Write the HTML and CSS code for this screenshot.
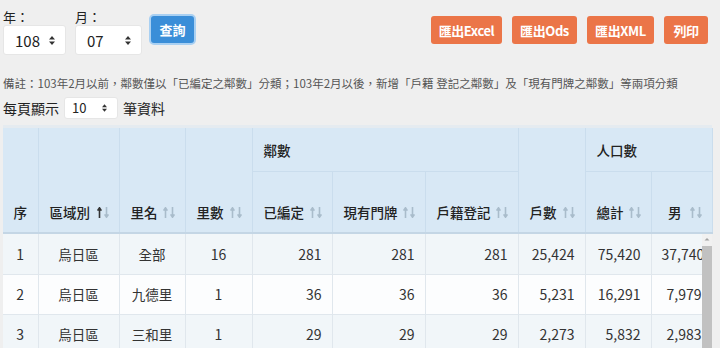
FILE: index.html
```html
<!DOCTYPE html>
<html lang="zh-Hant">
<head>
<meta charset="utf-8">
<title>鄰數統計</title>
<link rel="stylesheet" href="styles.css">
</head>
<body>
<div class="topbar">
  <div class="filters">
    <div class="field">
      <span class="label">年：</span>
      <div class="select select-lg"><span>108</span><svg class="caret" width="6" height="9" viewBox="0 0 6 9"><path d="M3 0 L6 3.5 H0 Z M3 9 L6 5.5 H0 Z" fill="#333"/></svg></div>
    </div>
    <div class="field">
      <span class="label">月：</span>
      <div class="select select-lg select-month"><span>07</span><svg class="caret" width="6" height="9" viewBox="0 0 6 9"><path d="M3 0 L6 3.5 H0 Z M3 9 L6 5.5 H0 Z" fill="#333"/></svg></div>
    </div>
    <button class="btn btn-query">查詢</button>
  </div>
  <div class="exports">
    <button class="btn btn-orange btn-excel">匯出Excel</button>
    <button class="btn btn-orange btn-ods">匯出Ods</button>
    <button class="btn btn-orange btn-xml">匯出XML</button>
    <button class="btn btn-orange btn-print">列印</button>
  </div>
</div>

<p class="note">備註：103年2月以前，鄰數僅以「已編定之鄰數」分類；103年2月以後，新增「戶籍 登記之鄰數」及「現有門牌之鄰數」等兩項分類</p>

<div class="length">
  <span>每頁顯示</span>
  <div class="select select-sm"><span>10</span><svg class="caret" width="5" height="8" viewBox="0 0 6 9"><path d="M3 0 L6 3.5 H0 Z M3 9 L6 5.5 H0 Z" fill="#333"/></svg></div>
  <span>筆資料</span>
</div>

<div class="dt">
  <table class="dt-head">
    <colgroup>
      <col class="c1"><col class="c2"><col class="c3"><col class="c4"><col class="c5"><col class="c6"><col class="c7"><col class="c8"><col class="c9"><col class="c10">
    </colgroup>
    <thead>
      <tr class="hr1">
        <th rowspan="2" class="nosort">序</th>
        <th rowspan="2">區域別<svg class="sort" width="12" height="11" viewBox="0 0 12 11"><path d="M2.5 11 V1.5 M0.6 3.6 L2.5 0.8 L4.4 3.6" stroke="#333" stroke-width="1.6" fill="none"/><path d="M9.5 0 V9.5 M7.6 7.4 L9.5 10.2 L11.4 7.4" stroke="#a9bccb" stroke-width="1.6" fill="none"/></svg></th>
        <th rowspan="2">里名<svg class="sort" width="12" height="11" viewBox="0 0 12 11"><path d="M2.5 11 V1.5 M0.6 3.6 L2.5 0.8 L4.4 3.6" stroke="#a9bccb" stroke-width="1.6" fill="none"/><path d="M9.5 0 V9.5 M7.6 7.4 L9.5 10.2 L11.4 7.4" stroke="#a9bccb" stroke-width="1.6" fill="none"/></svg></th>
        <th rowspan="2">里數<svg class="sort" width="12" height="11" viewBox="0 0 12 11"><path d="M2.5 11 V1.5 M0.6 3.6 L2.5 0.8 L4.4 3.6" stroke="#a9bccb" stroke-width="1.6" fill="none"/><path d="M9.5 0 V9.5 M7.6 7.4 L9.5 10.2 L11.4 7.4" stroke="#a9bccb" stroke-width="1.6" fill="none"/></svg></th>
        <th colspan="3" class="group">鄰數</th>
        <th rowspan="2">戶數<svg class="sort" width="12" height="11" viewBox="0 0 12 11"><path d="M2.5 11 V1.5 M0.6 3.6 L2.5 0.8 L4.4 3.6" stroke="#a9bccb" stroke-width="1.6" fill="none"/><path d="M9.5 0 V9.5 M7.6 7.4 L9.5 10.2 L11.4 7.4" stroke="#a9bccb" stroke-width="1.6" fill="none"/></svg></th>
        <th colspan="2" class="group">人口數</th>
      </tr>
      <tr class="hr2">
        <th>已編定<svg class="sort" width="12" height="11" viewBox="0 0 12 11"><path d="M2.5 11 V1.5 M0.6 3.6 L2.5 0.8 L4.4 3.6" stroke="#a9bccb" stroke-width="1.6" fill="none"/><path d="M9.5 0 V9.5 M7.6 7.4 L9.5 10.2 L11.4 7.4" stroke="#a9bccb" stroke-width="1.6" fill="none"/></svg></th>
        <th>現有門牌<svg class="sort" width="12" height="11" viewBox="0 0 12 11"><path d="M2.5 11 V1.5 M0.6 3.6 L2.5 0.8 L4.4 3.6" stroke="#a9bccb" stroke-width="1.6" fill="none"/><path d="M9.5 0 V9.5 M7.6 7.4 L9.5 10.2 L11.4 7.4" stroke="#a9bccb" stroke-width="1.6" fill="none"/></svg></th>
        <th>戶籍登記<svg class="sort" width="12" height="11" viewBox="0 0 12 11"><path d="M2.5 11 V1.5 M0.6 3.6 L2.5 0.8 L4.4 3.6" stroke="#a9bccb" stroke-width="1.6" fill="none"/><path d="M9.5 0 V9.5 M7.6 7.4 L9.5 10.2 L11.4 7.4" stroke="#a9bccb" stroke-width="1.6" fill="none"/></svg></th>
        <th>總計<svg class="sort" width="12" height="11" viewBox="0 0 12 11"><path d="M2.5 11 V1.5 M0.6 3.6 L2.5 0.8 L4.4 3.6" stroke="#a9bccb" stroke-width="1.6" fill="none"/><path d="M9.5 0 V9.5 M7.6 7.4 L9.5 10.2 L11.4 7.4" stroke="#a9bccb" stroke-width="1.6" fill="none"/></svg></th>
        <th class="right">男<svg class="sort" width="12" height="11" viewBox="0 0 12 11"><path d="M2.5 11 V1.5 M0.6 3.6 L2.5 0.8 L4.4 3.6" stroke="#a9bccb" stroke-width="1.6" fill="none"/><path d="M9.5 0 V9.5 M7.6 7.4 L9.5 10.2 L11.4 7.4" stroke="#a9bccb" stroke-width="1.6" fill="none"/></svg></th>
      </tr>
    </thead>
  </table>
  <div class="dt-scroll">
    <table class="dt-body">
      <colgroup>
        <col class="c1"><col class="c2"><col class="c3"><col class="c4"><col class="c5"><col class="c6"><col class="c7"><col class="c8"><col class="c9"><col class="c10">
      </colgroup>
      <tbody>
        <tr><td class="ctr">1</td><td class="ctr cjk">烏日區</td><td class="ctr cjk">全部</td><td class="ctr">16</td><td>281</td><td>281</td><td>281</td><td>25,424</td><td>75,420</td><td>37,740</td></tr>
        <tr><td class="ctr">2</td><td class="ctr cjk">烏日區</td><td class="ctr cjk">九德里</td><td class="ctr">1</td><td>36</td><td>36</td><td>36</td><td>5,231</td><td>16,291</td><td>7,979</td></tr>
        <tr><td class="ctr">3</td><td class="ctr cjk">烏日區</td><td class="ctr cjk">三和里</td><td class="ctr">1</td><td>29</td><td>29</td><td>29</td><td>2,273</td><td>5,832</td><td>2,983</td></tr>
      </tbody>
    </table>
    <div class="vscroll">
      <svg class="vscroll-up" width="10" height="12" viewBox="0 0 10 12"><path d="M2.5 6.5 L5 4 L7.5 6.5 Z" fill="#a3a3a3"/></svg>
      <div class="vscroll-thumb"></div>
    </div>
  </div>
</div>
</body>
</html>
```

FILE: styles.css
```css
html, body {
  overflow: hidden;
}
body {
  margin: 0;
  padding: 0 8px 0 3px;
  background: #efefef;
  font-family: "Noto Sans CJK TC", "Noto Sans", sans-serif;
  color: #222;
}
.topbar {
  display: flex;
  justify-content: space-between;
  align-items: flex-start;
}
.filters {
  display: flex;
  align-items: flex-start;
  padding-top: 8px;
}
.field {
  display: flex;
  flex-direction: column;
}
.field + .field {
  margin-left: 9px;
}
.label {
  font-size: 13px;
  line-height: 17px;
  color: #222;
}
.select {
  display: flex;
  align-items: center;
  justify-content: space-between;
  background: #fff;
  border: 1px solid #e6e6e6;
  border-radius: 3px;
  box-sizing: border-box;
  color: #222;
}
.select-lg {
  width: 63px;
  height: 30px;
  padding: 0 10px 0 11px;
  font-size: 15px;
}
.select-month {
  width: 67px;
}
.select-sm {
  width: 54px;
  height: 22px;
  padding: 0 10px 0 7px;
  font-size: 13px;
}
.btn {
  font-family: inherit;
  border: none;
  color: #fff;
  font-weight: 700;
  font-size: 13px;
  cursor: pointer;
}
.btn-query {
  margin-left: 7px;
  margin-top: 6px;
  width: 47px;
  height: 31px;
  background: #3a8ed8;
  border: 2px solid #a9d0f2;
  border-radius: 5px;
  padding: 0;
}
.exports {
  display: flex;
  gap: 10px;
  margin-top: 16px;
  margin-right: 4px;
}
.btn-orange {
  height: 28px;
  padding: 0;
  background: #eb7548;
  border-radius: 3px;
  letter-spacing: -0.4px;
  white-space: nowrap;
}
.btn-excel { width: 71px; }
.btn-ods { width: 65px; }
.btn-xml { width: 67px; }
.btn-print { width: 44px; }
.note {
  margin: 19px 0 0;
  font-size: 11.5px;
  line-height: 18px;
  color: #555;
  white-space: nowrap;
}
.length {
  display: flex;
  align-items: center;
  gap: 4px;
  margin-top: 5px;
  font-size: 14px;
  line-height: 22px;
  color: #222;
}
.length .select {
  margin: 0 1px;
}
.dt {
  width: 709px;
  margin-top: 6px;
  border-top: 3px solid #e5ebf0;
}
table {
  border-collapse: collapse;
  table-layout: fixed;
  width: 709px;
}
.c1 { width: 35px; }
.c2 { width: 81px; }
.c3 { width: 66px; }
.c4 { width: 67px; }
.c5 { width: 80px; }
.c6 { width: 93px; }
.c7 { width: 93px; }
.c8 { width: 67px; }
.c9 { width: 66px; }
.c10 { width: 61px; }
.dt-head th {
  position: relative;
  background: #d8e8f5;
  border: 1px solid #cadded;
  border-top: none;
  padding: 0 30px 10px 11px;
  vertical-align: bottom;
  text-align: left;
  font-weight: 500;
  font-size: 13.5px;
  line-height: 20px;
  color: #222;
  white-space: nowrap;
}
.dt-head tr.hr1 th:first-child {
  border-left: none;
}
.dt-head th.nosort {
  padding: 0 0 10px 0;
  text-align: center;
}
.dt-head th.group {
  vertical-align: middle;
  padding-bottom: 0;
  padding-top: 0;
}
.dt-head th.right {
  text-align: right;
}
.hr1 th {
  height: 43px;
}
.hr2 th {
  height: 50px;
  border-bottom: 2px solid #c4d6e5;
}
.hr1 th[rowspan] {
  border-bottom: 2px solid #c4d6e5;
}
.sort {
  position: absolute;
  right: 10px;
  bottom: 14px;
}
.dt-scroll {
  position: relative;
  height: 140px;
  overflow: hidden;
}
.vscroll {
  position: absolute;
  top: 0;
  right: 0;
  bottom: 0;
  width: 10px;
  background: #f1f1f1;
  display: flex;
  flex-direction: column;
}
.vscroll-up {
  flex: none;
}
.vscroll-thumb {
  flex: 1;
  background: #c1c1c1;
}
.dt-body td {
  height: 40px;
  box-sizing: border-box;
  padding: 0 10px;
  border: 1px solid #e0e7ed;
  border-top: none;
  text-align: right;
  font-size: 14px;
  color: #333;
  white-space: nowrap;
}
.dt-body td.cjk {
  font-size: 13.5px;
}
.dt-body td:first-child {
  border-left: none;
}
.dt-body td.ctr {
  text-align: center;
}
.dt-body tr:nth-child(odd) td {
  background: #f1f6f9;
}
.dt-body tr:nth-child(even) td {
  background: #fcfdfe;
}
```
